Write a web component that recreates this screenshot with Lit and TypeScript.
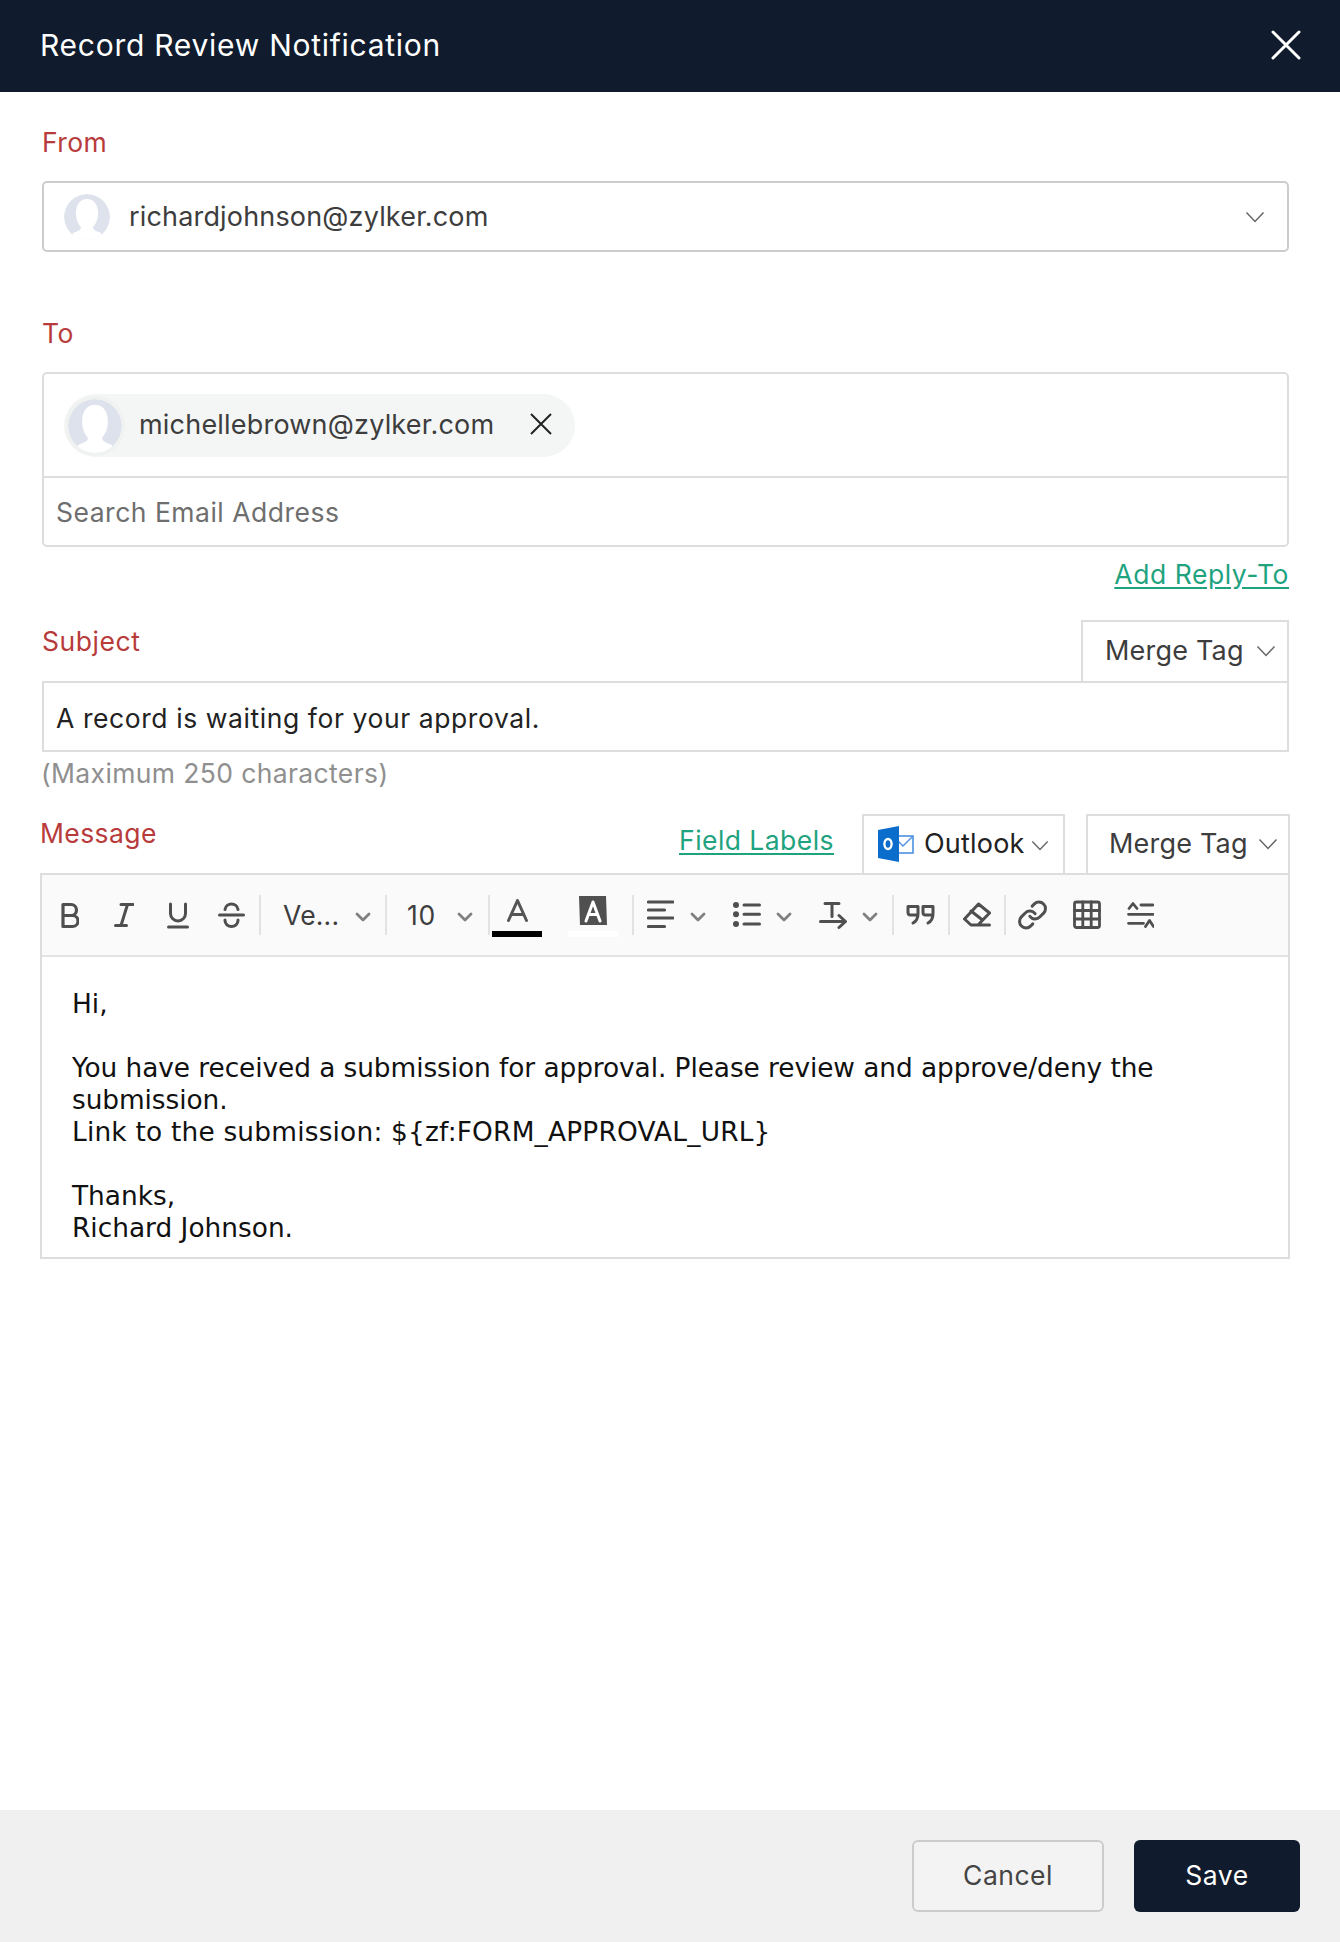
import { LitElement, html, css, svg } from "lit";
import { customElement } from "lit/decorators.js";

const chev = (cls: string) => html`<svg class=${cls} viewBox="0 0 20 12" fill="none" stroke="currentColor" stroke-width="1.5"><path d="M1.5 1.5 10 10.5 18.500 1.5"/></svg>`;
const tchev = html`<svg class="tchev" viewBox="0 0 16 10" fill="none" stroke="#808080" stroke-width="2.8" stroke-linecap="round" stroke-linejoin="round"><path d="M2 2l6 6 6-6"/></svg>`;
const ic = (name: string, w: number, body: unknown, sw = 3) => html`<svg class="ti ${name}" width=${w} height="30" viewBox="0 0 ${w} 30" fill="none" stroke="#4f4f4f" stroke-width=${sw} stroke-linecap="round" stroke-linejoin="round">${body}</svg>`;
const avatar = (size: number) => html`<svg width=${size} height=${size} viewBox="0 0 46 46"><defs><clipPath id="c${size}"><circle cx="23" cy="23" r="23"/></clipPath></defs><g clip-path="url(#c${size})"><circle cx="23" cy="23" r="23" fill="#dde2ec"/><path d="M23 5c7 0 11 6 11 14 0 6-2 11-5 14 0 3 3 4 8 6l3 7H6l3-7c5-2 8-3 8-6-3-3-5-8-5-14 0-8 4-14 11-14z" fill="#fff"/></g></svg>`;

@customElement("app-root")
export class AppRoot extends LitElement {
  static styles = css`
    :host { display: flex; flex-direction: column; width: 1340px; height: 1942px; background: #fff; font-family: Inter, "Liberation Sans", sans-serif; color: #333; overflow: hidden; }
    * { box-sizing: border-box; }
    header { height: 92px; background: #101b2d; color: #fff; display: flex; align-items: center; justify-content: space-between; padding: 0 39px 2px 40px; font-size: 30px; letter-spacing: .73px; flex: none; }
    header svg { display: block; }
    main { flex: 1; padding: 0 51px 0 42px; }
    .label { color: #b83b3b; font-size: 26.5px; line-height: 32px; letter-spacing: .4px; }
    .from-label { margin-top: 34px; }
    .select { margin-top: 23px; height: 71px; border: 2px solid #ccc; border-radius: 5px; display: flex; align-items: center; padding: 0 22px 0 20px; font-size: 27px; letter-spacing: .17px; color: #3d3d3d; }
    .select .name { margin-left: 19px; flex: 1; }
    .chev { width: 20px; height: 12px; color: #666; flex: none; }
    .to-label { margin-top: 65px; }
    .to { margin-top: 23px; border: 2px solid #ddd; border-radius: 5px; height: 175px; display: flex; flex-direction: column; }
    .chips { height: 104px; border-bottom: 2px solid #ddd; padding: 20px 0 0 20px; flex: none; }
    .chip { width: 511px; height: 63px; border-radius: 32px; background: #f4f6f6; display: flex; align-items: center; padding: 0 22px 3px 1px; font-size: 27px; letter-spacing: .2px; color: #3d3d3d; }
    .chip span { margin-left: 14px; flex: 1; }
    .chip svg { display: block; }
    .chip .av { border-radius: 50%; border: 3px solid #f0f2f2; width: 60px; height: 60px; overflow: hidden; flex: none; margin: 3px 0 0; }
    .search { flex: 1; display: flex; align-items: center; padding-left: 12px; font-size: 26.5px; letter-spacing: .5px; color: #6e6e6e; }
    .reply { display: flex; justify-content: flex-end; margin-top: 10px; line-height: 34px; }
    a { color: #1fa37f; font-size: 26.5px; letter-spacing: .55px; text-decoration: underline; text-underline-offset: 3px; }
    .row { display: flex; align-items: flex-end; justify-content: space-between; }
    .subject-row { margin-top: 29px; height: 61px; }
    .subject-row .label { margin-bottom: 24px; letter-spacing: .55px; }
    .tag { height: 61px; border: 2px solid #ddd; border-bottom: 0; display: flex; align-items: center; font-size: 27px; letter-spacing: .2px; color: #3d3d3d; padding-bottom: 2px; }
    .tag.m1 { width: 208px; padding-left: 22px; gap: 12px; }
    .tag.m2 { width: 204px; padding-left: 21px; gap: 10px; }
    .tag.ol { width: 203px; padding-left: 14px; color: #222; }
    .input { height: 71px; border: 2px solid #ddd; display: flex; align-items: center; padding: 2px 0 0 12px; font-size: 26.5px; letter-spacing: .58px; color: #222; }
    .hint { margin-top: 4px; font-size: 26.5px; line-height: 34px; letter-spacing: .37px; color: #8f8f8f; margin-left: -1px; }
    .msg-row { margin: 24px -1px 0 -2px; height: 59px; }
    .msg-row .label { margin-bottom: 24px; flex: 1; }
    .msg-row a { margin: 8px 28px 0 0; align-self: flex-start; line-height: 36px; letter-spacing: .45px; }
    .msg-row .tag { height: 59px; padding-bottom: 2px; }
    .msg-row .ol { margin-right: 21px; }
    .ol svg { display: block; margin-right: 10px; flex: none; }
    .ol .chev { width: 18px; height: 11px; margin: 3px 0 0 6px; }
    .editor { margin: 0 -1px 0 -2px; border: 2px solid #ddd; border-top: 0; }
    .toolbar { height: 84px; border-top: 2px solid #ddd; border-bottom: 2px solid #e4e4e4; background: #fafafa; display: flex; align-items: center; padding-left: 19px; color: #444; }
    .ti { display: block; flex: none; }
    .sep { width: 2px; height: 40px; background: #e2e2e2; flex: none; }
    .tchev { width: 16px; height: 10px; display: block; flex: none; margin-top: 4px; }
    .ttext { font-size: 26.5px; color: #3d3d3d; flex: none; }
    .family { margin-left: 22px; width: 54px; letter-spacing: .2px; white-space: nowrap; }
    .size { margin-left: 20px; width: 27px; letter-spacing: .8px; }
    .swatch { width: 50px; height: 41px; display: flex; flex-direction: column; align-items: center; flex: none; margin-top: 3px; }
    .swatch svg { display: block; flex: none; }
    .swatch span { display: block; width: 50px; height: 6px; flex: none; }
    .fore { margin-left: 2px; padding-top: 3px; }
    .fore span { background: #000; margin-top: 9px; }
    .back { margin-left: 26px; }
    .back span { background: #fff; margin-top: 6px; }
    .italic { margin-left: 35px; }
    .underline { margin-left: 33px; }
    .strike { margin-left: 29px; }
    .after-strike { margin-left: 14px; }
    .after-family { margin-left: 18px; }
    .after-size { margin-left: 23px; }
    .g12 { margin-left: 12px; }
    .g13 { margin-left: 13px; }
    .g14 { margin-left: 14px; }
    .g15 { margin-left: 15px; }
    .g16 { margin-left: 16px; }
    .g26 { margin-left: 26px; }
    .g27 { margin-left: 27px; }
    .content { height: 300px; padding: 31px 20px 0 30px; font-family: "DejaVu Sans", Verdana, sans-serif; font-size: 26.4px; line-height: 32px; color: #111; }
    .content div { min-height: 32px; }
    .content .tight { letter-spacing: -.08px; }
    .content .loose { letter-spacing: .2px; }
    footer { flex: none; height: 132px; background: #f0f0f0; display: flex; justify-content: flex-end; align-items: center; padding: 0 40px 0 0; gap: 30px; font-size: 26.5px; letter-spacing: .5px; }
    .btn { height: 72px; border-radius: 6px; display: flex; align-items: center; justify-content: center; padding-bottom: 2px; }
    .cancel { width: 192px; border: 2px solid #ccc; background: #f3f3f3; color: #444; }
    .save { width: 166px; background: #101b2d; color: #fff; }
  `;

  render() {
    return html`
      <header>
        <span>Record Review Notification</span>
        <svg width="30" height="30" viewBox="0 0 30 30" stroke="#fff" stroke-width="3" stroke-linecap="round" fill="none"><path d="M2 2l26 26M28 2L2 28"/></svg>
      </header>
      <main>
        <div class="label from-label">From</div>
        <div class="select">
          ${avatar(46)}
          <span class="name">richardjohnson@zylker.com</span>
          ${chev("chev")}
        </div>
        <div class="label to-label">To</div>
        <div class="to">
          <div class="chips">
            <div class="chip">
              <div class="av">${avatar(54)}</div>
              <span>michellebrown@zylker.com</span>
              <svg width="24" height="24" viewBox="0 0 24 24" stroke="#222" stroke-width="2" fill="none"><path d="M2 2l20 20M22 2L2 22"/></svg>
            </div>
          </div>
          <div class="search">Search Email Address</div>
        </div>
        <div class="reply"><a>Add Reply-To</a></div>
        <div class="row subject-row">
          <div class="label">Subject</div>
          <div class="tag m1">Merge Tag ${chev("chev")}</div>
        </div>
        <div class="input">A record is waiting for your approval.</div>
        <div class="hint">(Maximum 250 characters)</div>
        <div class="row msg-row">
          <div class="label">Message</div>
          <a>Field Labels</a>
          <div class="tag ol">
            <svg width="36" height="36" viewBox="0 0 36 36"><rect x="16" y="10" width="19" height="17" fill="#fff" stroke="#4a90e2" stroke-width="1.6"/><path d="M16 11l9 9 9-9" fill="none" stroke="#4a90e2" stroke-width="1.4"/><path d="M0 4l21-4v36L0 32z" fill="#0a6ccb"/><ellipse cx="10" cy="18" rx="3.600" ry="5" fill="none" stroke="#fff" stroke-width="2.400"/></svg>
            Outlook${chev("chev")}
          </div>
          <div class="tag m2">Merge Tag ${chev("chev")}</div>
        </div>
        <div class="editor">
          <div class="toolbar">
            ${ic("", 18, svg`<path d="M2 4.500h8a5.500 5.500 0 0 1 0 11H2zM2 15.500h9.500a5.500 5.500 0 0 1 0 11H2z"/>`, 3.2)}
            ${ic("italic", 20, svg`<path d="M7 4.500h12M1.500 25.500h11M13.500 4.500 7 25.500"/>`)}
            ${ic("underline", 22, svg`<path d="M3.500 4v9.500a7.500 7.500 0 0 0 15 0V4M1.500 27h19"/>`)}
            ${ic("strike", 27, svg`<path d="M1.500 15h24M20 9.500c-.5-3.500-3.500-5.500-6.500-5.500S7.500 6 7 9.500M7 20v.5c0 3.500 3 6 6.500 6s6.500-2.500 6.500-6V20"/>`)}
            <span class="sep after-strike"></span>
            <span class="ttext family">Ve...</span>
            <span class="after-family">${tchev}</span>
            <span class="sep g14"></span>
            <span class="ttext size">10</span>
            <span class="after-size">${tchev}</span>
            <span class="sep g15"></span>
            <div class="swatch fore">
              <svg width="21" height="23" viewBox="0 0 21 23" fill="none" stroke="#555" stroke-width="3" stroke-linecap="round" stroke-linejoin="round"><path d="M1.500 21.500 10.500 1.500l9 20M5 15.500h11"/></svg>
              <span></span>
            </div>
            <div class="swatch back">
              <svg width="28" height="29" viewBox="0 0 28 29"><path d="M0 0h27l1 29H1z" fill="#505050"/><path d="M7 25 14 6l7 19M10 18.500h8" fill="none" stroke="#fff" stroke-width="3" stroke-linecap="round" stroke-linejoin="round"/></svg>
              <span></span>
            </div>
            <span class="sep g14"></span>
            ${ic("g13", 27, svg`<path d="M1.500 2h24.500M1.500 10h16M1.500 18h24.500M1.500 26.500h16"/>`, 3.2)}
            <span class="g16">${tchev}</span>
            ${ic("g27", 28, svg`<path d="M11 5h15.500M11 14.300h15.500M11 24h15.500"/><circle cx="3" cy="5" r="3" fill="#4f4f4f" stroke="none"/><circle cx="3" cy="14.300" r="3" fill="#4f4f4f" stroke="none"/><circle cx="3" cy="24" r="3" fill="#4f4f4f" stroke="none"/>`)}
            <span class="g15">${tchev}</span>
            ${ic("g27", 28, svg`<path d="M6 3.500h14M13 3.500v13M1.500 21.500h25M20 15.500l6.500 6-6.500 6"/>`)}
            <span class="g15">${tchev}</span>
            <span class="sep g14"></span>
            ${ic("g12", 29, svg`<path d="M2 6.500h10v7c0 5-2 8-5 9.500M2 6.500v6c0 1.500 1 2.500 2.500 2.500h7.500M17 6.500h10v7c0 5-2 8-5 9.500M17 6.500v6c0 1.500 1 2.500 2.500 2.500h7.500"/>`)}
            <span class="sep g13"></span>
            ${ic("g13", 28, svg`<path d="M15.500 4 26.500 13 15 25H8L1.500 19zM8 11l11.500 9M15 25h11.500"/>`)}
            <span class="sep g13"></span>
            <svg class="ti g12" width="29" height="30" viewBox="1 0.500 22 23" fill="none" stroke="#4f4f4f" stroke-width="2.300" stroke-linecap="round" stroke-linejoin="round"><path d="M10 13a5 5 0 0 0 7.540.54l3-3a5 5 0 0 0-7.070-7.070l-1.720 1.710"/><path d="M14 11a5 5 0 0 0-7.540-.54l-3 3a5 5 0 0 0 7.070 7.070l1.710-1.710"/></svg>
            ${ic("g26", 28, svg`<rect x="1.500" y="2" width="25" height="25.500" rx="2"/><path d="M1.500 10.500h25M1.500 19h25M9.800 2v25.500M18.200 2v25.500"/>`, 2.8)}
            ${ic("g26", 27, svg`<path d="M2 8.500l4-5 4 5M14 5h12M1.500 14.300h24.500M1.500 23.300h15M18.500 26.500l4-6 4 6"/>`, 2.8)}
          </div>
          <div class="content">
            <div>Hi,</div>
            <div></div>
            <div class="tight">You have received a submission for approval. Please review and approve/deny the submission.</div>
            <div class="loose">Link to the submission: \${zf:FORM_APPROVAL_URL}</div>
            <div></div>
            <div>Thanks,</div>
            <div>Richard Johnson.</div>
          </div>
        </div>
      </main>
      <footer>
        <div class="btn cancel">Cancel</div>
        <div class="btn save">Save</div>
      </footer>
    `;
  }
}
